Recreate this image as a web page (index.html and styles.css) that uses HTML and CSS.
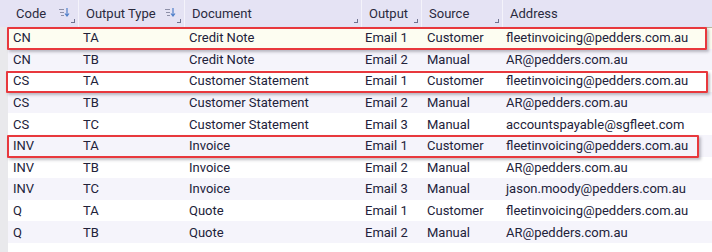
FILE: index.html
```html
<!DOCTYPE html>
<html lang="en">
<head>
    <meta charset="UTF-8">
    <title>Output addresses</title>
    <link rel="stylesheet" href="styles.css">
</head>
<body>
    <div class="grid-view">
        <div class="head">
            <div class="hcell first">Code
                <svg class="sort" width="11" height="9" viewBox="0 0 11 9"><path d="M0 1.5h5M1 4.5h4M2 7.5h3" stroke="#8e90a8" stroke-width="1"/><path d="M8 0v7.5M6 5.5l2 2.5 2-2.5" stroke="#4f7fc9" stroke-width="1.2" fill="none"/></svg>
                <span class="grip"></span>
            </div>
            <div class="hcell">Output Type
                <svg class="sort" width="11" height="9" viewBox="0 0 11 9"><path d="M0 1.5h5M1 4.5h4M2 7.5h3" stroke="#8e90a8" stroke-width="1"/><path d="M8 0v7.5M6 5.5l2 2.5 2-2.5" stroke="#4f7fc9" stroke-width="1.2" fill="none"/></svg>
                <span class="grip"></span>
            </div>
            <div class="hcell">Document<span class="grip"></span></div>
            <div class="hcell">Output<span class="grip"></span></div>
            <div class="hcell">Source<span class="grip"></span></div>
            <div class="hcell">Address</div>
        </div>

        <div class="body">
            <div class="row selected"><span>CN</span><span>TA</span><span>Credit Note</span><span>Email 1</span><span>Customer</span><span>fleetinvoicing@pedders.com.au</span></div>
            <div class="row alt"><span>CN</span><span>TB</span><span>Credit Note</span><span>Email 2</span><span>Manual</span><span>AR@pedders.com.au</span></div>
            <div class="row"><span>CS</span><span>TA</span><span>Customer Statement</span><span>Email 1</span><span>Customer</span><span>fleetinvoicing@pedders.com.au</span></div>
            <div class="row alt"><span>CS</span><span>TB</span><span>Customer Statement</span><span>Email 2</span><span>Manual</span><span>AR@pedders.com.au</span></div>
            <div class="row"><span>CS</span><span>TC</span><span>Customer Statement</span><span>Email 3</span><span>Manual</span><span>accountspayable@sgfleet.com</span></div>
            <div class="row alt"><span>INV</span><span>TA</span><span>Invoice</span><span>Email 1</span><span>Customer</span><span>fleetinvoicing@pedders.com.au</span></div>
            <div class="row"><span>INV</span><span>TB</span><span>Invoice</span><span>Email 2</span><span>Manual</span><span>AR@pedders.com.au</span></div>
            <div class="row alt"><span>INV</span><span>TC</span><span>Invoice</span><span>Email 3</span><span>Manual</span><span>jason.moody@pedders.com.au</span></div>
            <div class="row"><span>Q</span><span>TA</span><span>Quote</span><span>Email 1</span><span>Customer</span><span>fleetinvoicing@pedders.com.au</span></div>
            <div class="row alt"><span>Q</span><span>TB</span><span>Quote</span><span>Email 2</span><span>Manual</span><span>AR@pedders.com.au</span></div>
        </div>

        <!-- annotation boxes -->
        <div class="mark mark-1"></div>
        <div class="mark mark-2"></div>
        <div class="mark mark-3"></div>
    </div>
</body>
</html>
```
FILE: styles.css
```css
body {
    margin: 0;
    font-family: Roboto, 'Liberation Sans', sans-serif;
    font-size: 13px;
    color: #22223a;
    background: #fff;
}
.grid-view {
    position: relative;
    width: 712px;
    height: 252px;
    overflow: hidden;
}
.head {
    display: grid;
    grid-template-columns: 78px 106px 177px 60px 81px 1fr;
    height: 27px;
    background: #e5e3f4;
    color: #2a2a3e;
}
.hcell {
    position: relative;
    display: flex;
    align-items: center;
    padding-left: 7px;
    border-left: 1px solid #f4f3fb;
}
.hcell.first {
    border-left: none;
    padding-left: 16px;
}
.sort {
    position: absolute;
    right: 8px;
    top: 8px;
}
.grip {
    position: absolute;
    right: 3px;
    bottom: 4px;
    width: 3px;
    height: 3px;
    border-right: 1px solid #6f7390;
    border-bottom: 1px solid #6f7390;
}
.body {
    border-left: 8px solid #e9e9ec;
    height: 225px;
}
.row {
    display: grid;
    grid-template-columns: 70px 106px 177px 60px 81px 1fr;
    height: 21.6px;
    align-items: center;
    white-space: nowrap;
}
.row span {
    padding-left: 5px;
}
.row span:nth-child(4),
.row span:nth-child(6) {
    padding-left: 4px;
}
.row span:nth-child(5) {
    padding-left: 6px;
}
.row.alt {
    background: #f5f4fb;
}
.row.selected {
    background: #fdfdf1;
    box-shadow: inset 0 1px 0 #b9b99c;
}
.mark {
    position: absolute;
    border: 2px solid #e8383d;
    border-radius: 1px;
    box-shadow: 2px 2px 3px rgba(40, 40, 60, 0.3);
}
.mark-1 { left: 7px; top: 27px; width: 696px; height: 19px; }
.mark-2 { left: 6px; top: 71px; width: 698px; height: 18px; }
.mark-3 { left: 7px; top: 135px; width: 688px; height: 19px; }
```
